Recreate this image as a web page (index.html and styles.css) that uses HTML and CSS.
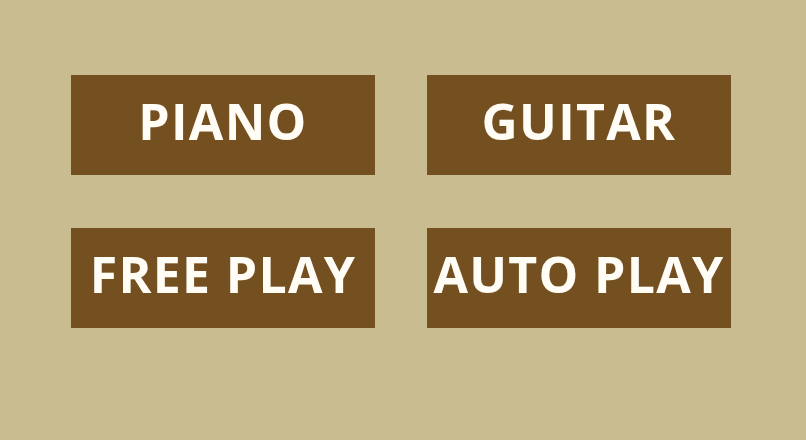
FILE: index.html
```html
<!DOCTYPE html>
<html>
<head>
<meta charset="utf-8">
<link rel="stylesheet" href="styles.css">
</head>
<body>
<div class="menu">
  <div class="btn">PIANO</div>
  <div class="btn">GUITAR</div>
  <div class="btn">FREE PLAY</div>
  <div class="btn">AUTO PLAY</div>
</div>
</body>
</html>
```
FILE: styles.css
```css
html, body {
  margin: 0;
  padding: 0;
  background: #c8bc90;
  width: 806px;
  height: 440px;
  overflow: hidden;
}
.menu {
  display: grid;
  grid-template-columns: 304px 304px;
  grid-auto-rows: 100px;
  column-gap: 52px;
  row-gap: 53px;
  padding: 75px 0 0 71px;
}
.btn {
  background: #744f1f;
  color: #fffdf5;
  font-family: "Open Sans", sans-serif;
  font-weight: 700;
  font-size: 50px;
  letter-spacing: 1.3px;
  line-height: 1;
  display: flex;
  align-items: center;
  justify-content: center;
  padding-bottom: 9px;
  box-sizing: border-box;
  white-space: nowrap;
}
```
